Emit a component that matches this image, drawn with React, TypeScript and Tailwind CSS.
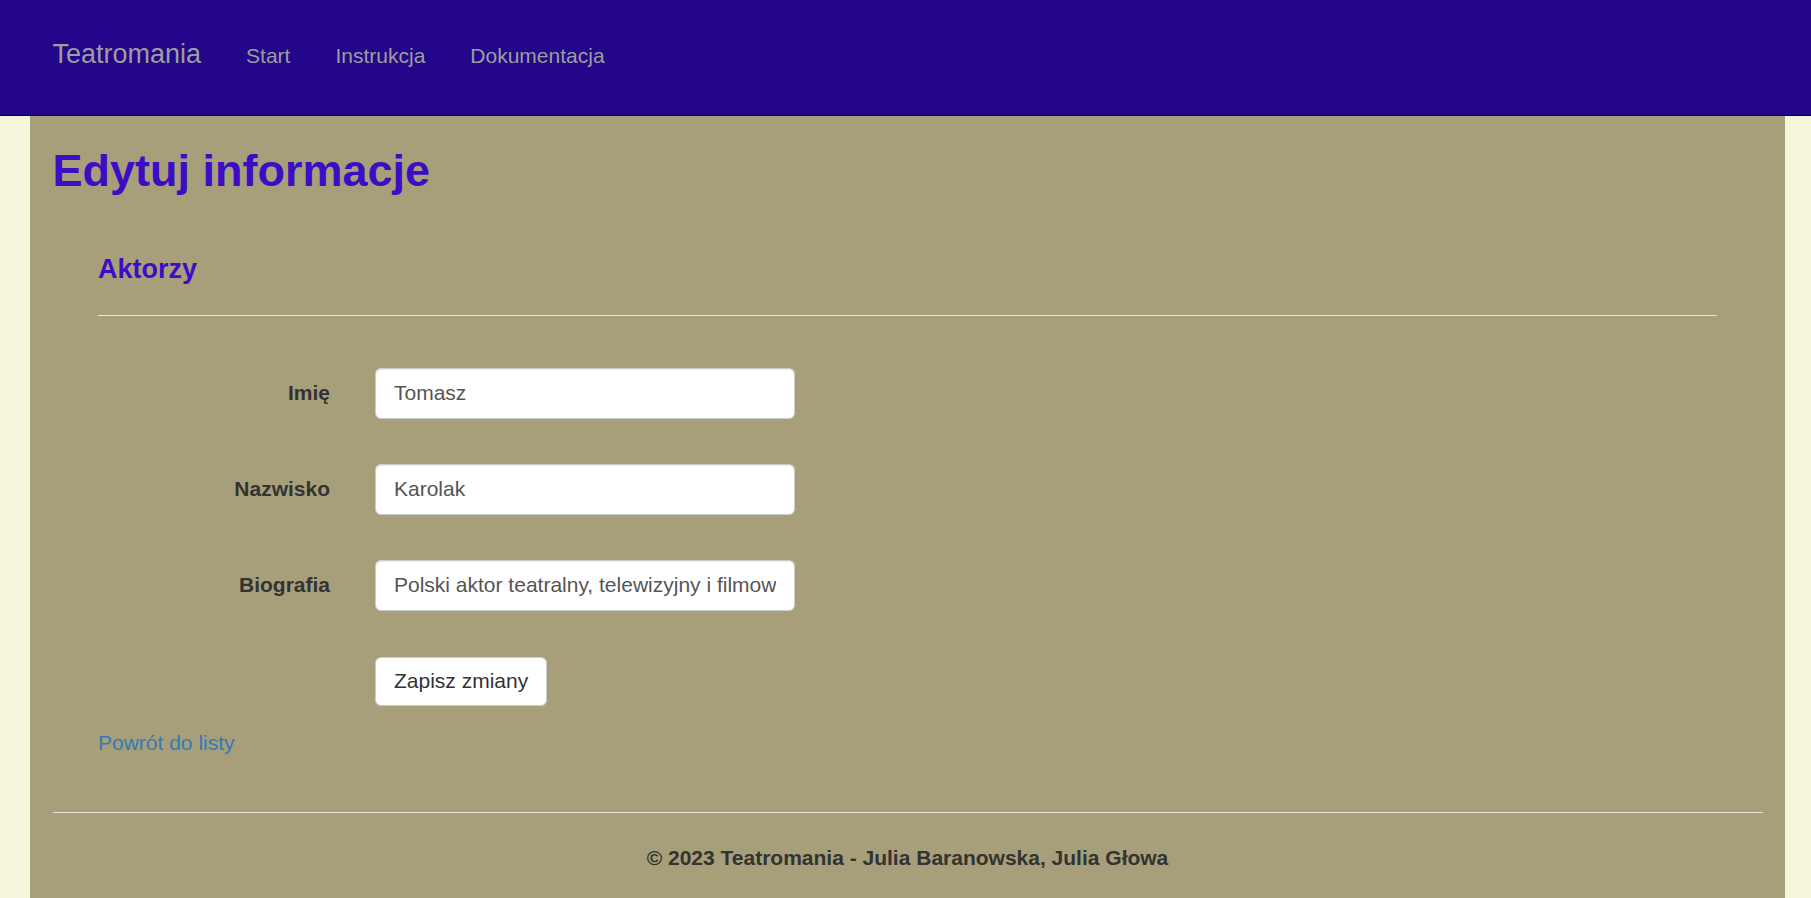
import React from "react";

const fields = [
  { label: "Imię", value: "Tomasz" },
  { label: "Nazwisko", value: "Karolak" },
  { label: "Biografia", value: "Polski aktor teatralny, telewizyjny i filmowy, reżyser i producent." },
];

export default function App() {
  return (
    <div className="min-h-screen bg-[#f5f5dc] font-['Liberation_Sans',Arial,sans-serif] text-[#333]">
      {/* Navbar */}
      <nav className="h-[116px] bg-[#23068a] border-b border-[#080808] flex items-baseline pt-[39px] px-[30px]">
        <a href="#" className="px-[22.5px] text-[27px] leading-[30px] text-[#9d9d9d]">
          Teatromania
        </a>
        <ul className="flex items-baseline">
          {["Start", "Instrukcja", "Dokumentacja"].map((item) => (
            <li key={item}>
              <a href="#" className="block px-[22.5px] text-[21px] leading-[30px] text-[#9d9d9d]">
                {item}
              </a>
            </li>
          ))}
        </ul>
      </nav>

      {/* Body content */}
      <div className="ml-[30px] w-[1755px] bg-[#a79f79] px-[22.5px] pt-[30px] pb-[40px]">
        <h2 className="text-[45px] leading-[49.5px] font-bold text-[#3c0dc4]">Edytuj informacje</h2>

        <div className="px-[45.5px]">
          <h4 className="mt-[59.5px] text-[27px] leading-[29.7px] font-bold text-[#3c0dc4]">Aktorzy</h4>
          <div className="mt-[30px] h-px bg-[#e6e6e0]" />

          <form className="mt-[52px]">
            <div className="flex flex-col gap-[45px]">
              {fields.map((f) => (
                <div key={f.label} className="flex items-center">
                  <label className="w-[232px] text-right text-[21px] font-bold text-[#333]">{f.label}</label>
                  <input
                    type="text"
                    defaultValue={f.value}
                    className="ml-[45px] w-[420px] h-[51px] px-[18px] bg-white border border-[#ccc] rounded-[6px] shadow-[inset_0_1px_1px_rgba(0,0,0,0.075)] text-[21px] text-[#555] outline-none"
                  />
                </div>
              ))}
            </div>
            <div className="mt-[46px] flex">
              <button
                type="button"
                className="ml-[277px] h-[49px] px-[18px] bg-white border border-[#ccc] rounded-[6px] text-[21px] text-[#333]"
              >
                Zapisz zmiany
              </button>
            </div>
          </form>

          <a href="#" className="block mt-[22.5px] text-[21px] leading-[30px] text-[#337ab7] w-max">
            Powrót do listy
          </a>
        </div>

        <div className="mt-[54px] h-px bg-[#e6e6e0]" />
        <footer className="mt-[30px] text-center text-[21px] leading-[30px] font-bold text-[#333]">
          © 2023 Teatromania - Julia Baranowska, Julia Głowa
        </footer>
      </div>
    </div>
  );
}
